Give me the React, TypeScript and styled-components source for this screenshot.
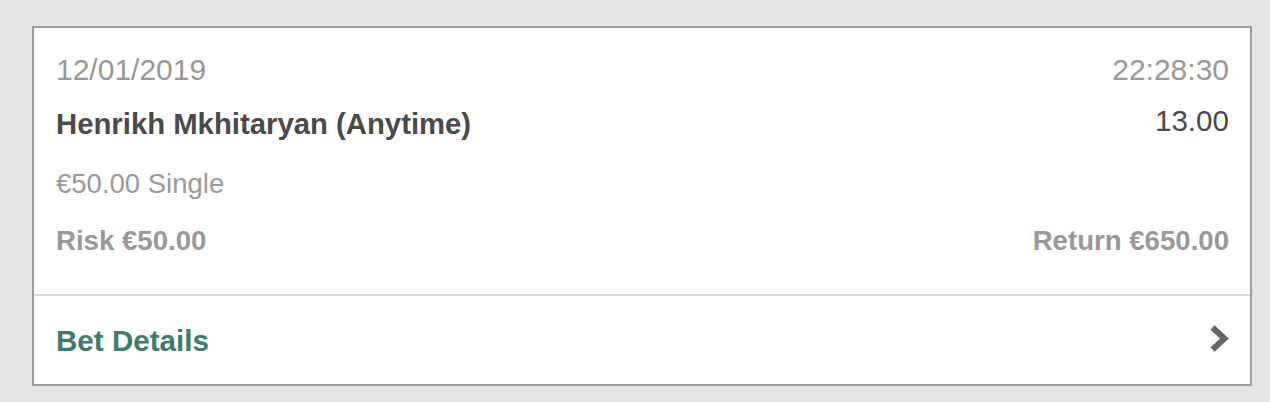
import styled, { createGlobalStyle } from 'styled-components';

const GlobalStyle = createGlobalStyle`
  html, body {
    margin: 0;
    padding: 0;
    background: #e5e5e5;
    font-family: 'Liberation Sans', Arial, Helvetica, sans-serif;
  }
`;

const Page = styled.div`
  padding: 26px 18px 16px 32px;
`;

const Card = styled.div`
  width: 1220px;
  height: 360px;
  box-sizing: border-box;
  background: #fff;
  border: 2px solid #9d9d9d;
  display: flex;
  flex-direction: column;
`;

const Summary = styled.div`
  padding: 27px 21px 0 22px;
  height: 268px;
  box-sizing: border-box;
  border-bottom: 2px solid #d8d8d8;
  display: flex;
  flex-direction: column;
`;

const Row = styled.div<{ $gap?: number }>`
  display: flex;
  justify-content: space-between;
  align-items: flex-start;
  margin-top: ${({ $gap }) => $gap ?? 0}px;
`;

const Stamp = styled.span`
  font-size: 30px;
  line-height: 30px;
  color: #999;
`;

const Selection = styled.span`
  font-size: 29.3px;
  line-height: 30px;
  font-weight: bold;
  color: #4a4a4a;
`;

const Odds = styled.span`
  font-size: 29.6px;
  line-height: 24px;
  color: #4a4a4a;
`;

const Stake = styled.span`
  font-size: 27.5px;
  line-height: 28px;
  color: #999;
`;

const Total = styled.span`
  font-size: 27.6px;
  line-height: 28px;
  font-weight: bold;
  color: #999;
`;

const Footer = styled.a`
  flex: 1;
  display: flex;
  align-items: center;
  justify-content: space-between;
  padding: 2px 21px 0 22px;
  text-decoration: none;
  cursor: pointer;
`;

const FooterLabel = styled.span`
  font-size: 29.6px;
  line-height: 30px;
  font-weight: bold;
  color: #3e7c6a;
`;

const Chevron = styled.svg`
  width: 20px;
  height: 27px;
  margin-top: -6px;
`;

const App = () => {
  return (
    <Page>
      <GlobalStyle />
      <Card>
        <Summary>
          <Row>
            <Stamp>12/01/2019</Stamp>
            <Stamp>22:28:30</Stamp>
          </Row>
          <Row $gap={24}>
            <Selection>Henrikh Mkhitaryan (Anytime)</Selection>
            <Odds>13.00</Odds>
          </Row>
          <Row $gap={31}>
            <Stake>€50.00 Single</Stake>
          </Row>
          <Row $gap={29}>
            <Total>Risk €50.00</Total>
            <Total>Return €650.00</Total>
          </Row>
        </Summary>
        <Footer>
          <FooterLabel>Bet Details</FooterLabel>
          <Chevron viewBox="0 0 20 27">
            <polyline
              points="3.5,2.5 15.5,13.5 3.5,24.5"
              fill="none"
              stroke="#666"
              strokeWidth="6"
              strokeLinejoin="miter"
            />
          </Chevron>
        </Footer>
      </Card>
    </Page>
  );
};

export default App;
